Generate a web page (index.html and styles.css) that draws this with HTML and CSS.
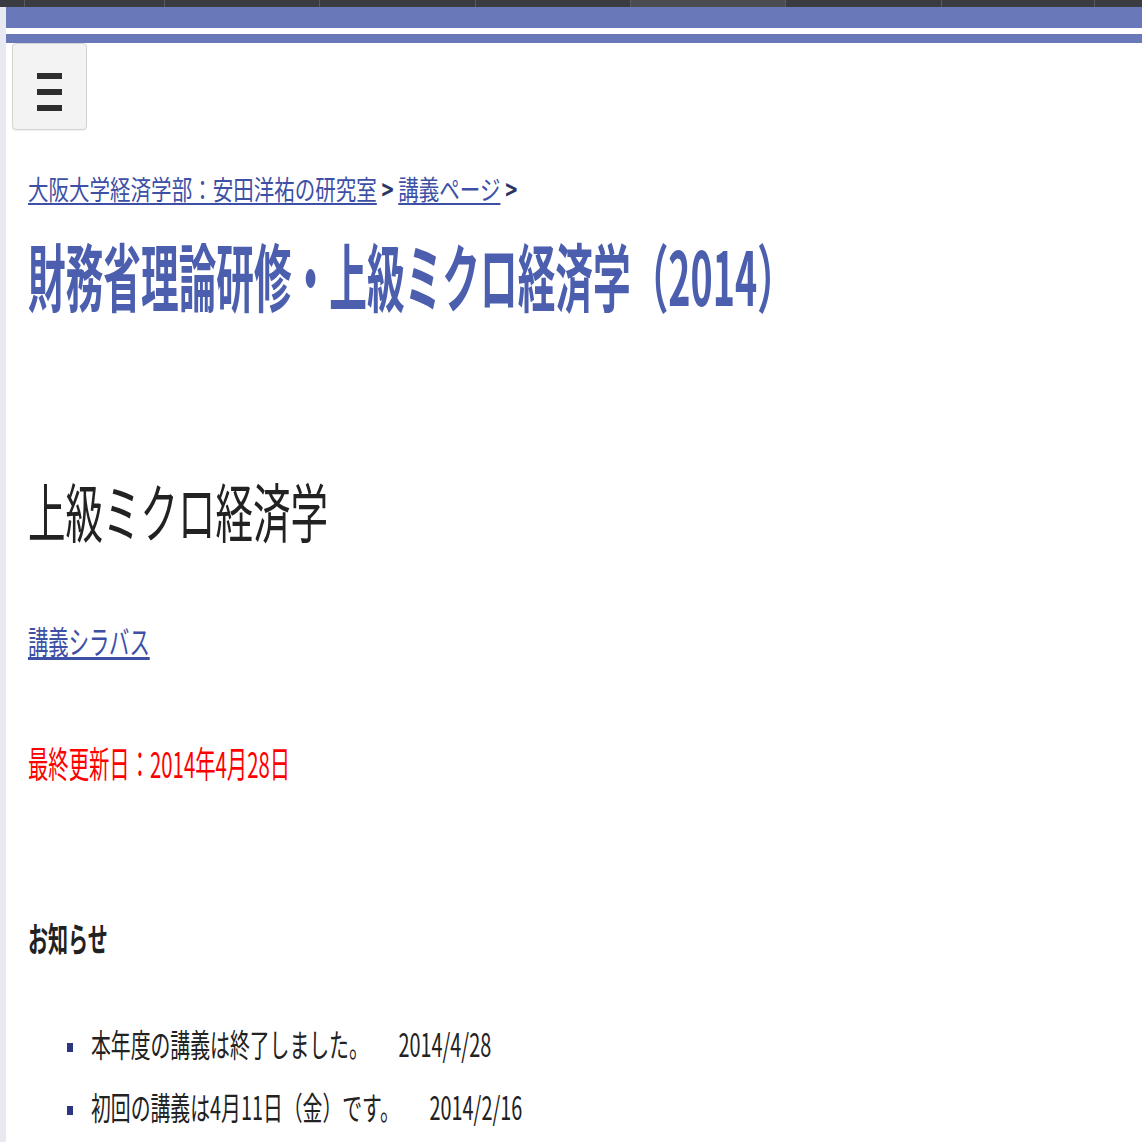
FILE: index.html
```html
<!DOCTYPE html>
<html lang="ja">
<head>
<meta charset="utf-8">
<title>財務省理論研修・上級ミクロ経済学（2014）</title>
<link rel="stylesheet" href="styles.css">
</head>
<body>
<div class="tabs">
  <span class="tab t0"></span>
  <span class="tab t1"></span>
  <span class="tab t2"></span>
  <span class="tab t3"></span>
  <span class="tab t4"></span>
  <span class="tab t5 active"></span>
  <span class="tab t6"></span>
  <span class="tab t7"></span>
  <span class="tab t8"></span>
</div>
<div class="frame">
  <div class="strip"></div>
  <div class="main">
    <div class="band band-top"></div>
    <div class="band band-thin"></div>
    <button class="menu-btn" type="button" aria-label="menu">
      <span class="bar"></span><span class="bar"></span><span class="bar"></span>
    </button>
    <div class="content">
      <div class="line crumbs"><a href="#" class="crumb-link">大阪大学経済学部：安田洋祐の研究室</a><span class="sep"> &gt; </span><a href="#" class="crumb-link">講義ページ</a><span class="sep"> &gt;</span></div>
      <h1 class="line title">財務省理論研修・上級ミクロ経済学（2014）</h1>
      <h2 class="line subtitle">上級ミクロ経済学</h2>
      <div class="line syllabus"><a href="#" class="plain-link">講義シラバス</a></div>
      <div class="line updated">最終更新日：2014年4月28日</div>
      <h3 class="line notice">お知らせ</h3>
      <ul class="news">
        <li class="news-item"><span class="bullet"></span><span class="line news-text">本年度の講義は終了しました。　　2014/4/28</span></li>
        <li class="news-item"><span class="bullet"></span><span class="line news-text">初回の講義は4月11日（金）です。　　2014/2/16</span></li>
      </ul>
    </div>
  </div>
</div>
</body>
</html>
```

FILE: styles.css
```css
html { overflow-x: hidden; }
body {
  margin: 0;
  background: #ffffff;
  font-family: "Noto Sans CJK JP", "Noto Sans", sans-serif;
  color: #222222;
}

.tabs {
  display: flex;
  height: 7px;
  background: #3b3c41;
}
.tab {
  display: block;
  height: 7px;
  border-right: 1px solid #5a5b60;
  box-sizing: border-box;
}
.t0 { width: 25px; }
.t1 { width: 140px; }
.t2 { width: 155px; }
.t3 { width: 156px; }
.t4 { width: 155px; }
.t5 { width: 155px; }
.t6 { width: 156px; }
.t7 { width: 153px; }
.t8 { flex: 1; border-right: none; }
.active { background: #4b4c51; }

.frame {
  display: flex;
  min-height: 1135px;
}
.strip {
  width: 6px;
  background: #e9eaf1;
  flex: none;
}
.main {
  flex: 1;
  min-width: 0;
}
.band { background: #6878b9; }
.band-top { height: 21px; margin-bottom: 6px; }
.band-thin { height: 9px; }

.menu-btn {
  display: flex;
  flex-direction: column;
  align-items: center;
  gap: 10px;
  margin: 0 0 0 6px;
  padding: 29px 0 0;
  width: 75px;
  height: 87px;
  box-sizing: border-box;
  background: #f3f3f3;
  border: 1px solid #d3d3d3;
  border-radius: 4px;
  box-shadow: 0 1px 1px rgba(0,0,0,0.06);
}
.bar {
  display: block;
  width: 25px;
  height: 6px;
  background: #2e2e2e;
}

.content {
  padding-left: 22px;
}
.line {
  display: block;
  margin: 0;
  line-height: 1;
  white-space: nowrap;
  transform-origin: 0 0;
  font-weight: 400;
}

.crumbs {
  margin-top: 45px;
  font-size: 27px;
  transform: scaleX(0.76);
  color: #2d3566;
}
.crumb-link {
  color: #3d50a6;
  text-decoration: underline;
  text-underline-offset: 3px;
}
.sep { color: #2d3566; font-weight: 700; }

.title {
  margin-top: 35px;
  font-size: 74px;
  font-weight: 700;
  color: #4b5fae;
  transform: scaleX(0.509);
}
.subtitle {
  margin-top: 166px;
  font-size: 64px;
  color: #222222;
  transform: scaleX(0.586);
}
.syllabus {
  margin-top: 83px;
  font-size: 32px;
  transform: scaleX(0.635);
}
.plain-link {
  color: #3d50a6;
  text-decoration: underline;
  text-underline-offset: 3px;
}
.updated {
  margin-top: 88px;
  font-size: 36px;
  color: #ff0000;
  transform: scaleX(0.565);
}
.notice {
  margin-top: 141px;
  font-size: 34px;
  font-weight: 700;
  color: #222222;
  transform: scaleX(0.59);
}

.news {
  list-style: none;
  margin: 72px 0 0;
  padding: 0;
  display: flex;
  flex-direction: column;
  gap: 31px;
}
.news-item {
  display: flex;
  align-items: flex-start;
}
.bullet {
  flex: none;
  width: 6px;
  height: 9px;
  margin: 16px 0 0 39px;
  background: #2b3580;
}
.news-text {
  margin-left: 18px;
  font-size: 32px;
  color: #222222;
  transform: scaleX(0.62);
}
```
